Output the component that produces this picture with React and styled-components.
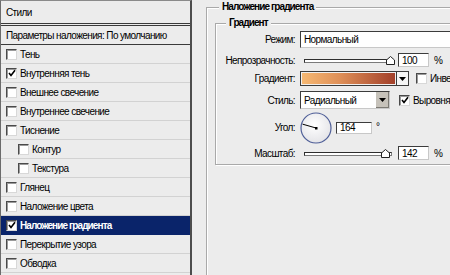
import React from "react";
import styled, { createGlobalStyle } from "styled-components";

const GlobalStyle = createGlobalStyle`
  html, body {
    margin: 0;
    padding: 0;
    background: #ececec;
  }
  body {
    font-family: "Liberation Sans", Arial, sans-serif;
    font-size: 10px;
    letter-spacing: -0.6px;
    color: #000;
  }
`;

const Window = styled.div`
  display: flex;
  width: 450px;
  height: 275px;
  overflow: hidden;
  background: #ececec;
`;

/* ---------- left list ---------- */

const ListPanel = styled.div`
  width: 189px;
  flex-shrink: 0;
  border-left: 1px solid #6b6b6b;
  border-right: 2px solid #4d4d4d;
  border-top: 1px solid #8a8a8a;
  display: flex;
  flex-direction: column;
`;

const ListHeader = styled.div`
  height: 22px;
  display: flex;
  align-items: center;
  padding-left: 5px;
  border-bottom: 3px double #3a3a3a;
`;

const ListBlend = styled.div`
  height: 18px;
  display: flex;
  align-items: center;
  padding-left: 5px;
  white-space: nowrap;
  border-bottom: 1px solid #3a3a3a;
`;

const ListRow = styled.div`
  height: 18px;
  display: flex;
  align-items: center;
  gap: 3px;
  padding-left: ${(p) => (p.$sub ? 17 : 5)}px;
  border-bottom: 1px solid ${(p) => (p.$active ? "#0a246a" : "#d2d2d2")};
  background: ${(p) => (p.$active ? "#0a246a" : "transparent")};
  color: ${(p) => (p.$active ? "#fff" : "#000")};
  font-weight: ${(p) => (p.$active ? 700 : 400)};
  letter-spacing: ${(p) => (p.$active ? -0.9 : -0.6)}px;
  white-space: nowrap;
`;

const Box = styled.span`
  width: 9px;
  height: 9px;
  flex-shrink: 0;
  display: inline-flex;
  align-items: center;
  justify-content: center;
  background: #fff;
  border: 1px solid;
  border-color: #4a4a4a #d8d8d8 #d8d8d8 #4a4a4a;
  box-shadow: inset 1px 1px 0 #9a9a9a;
`;

const Check = ({ on }) => (
  <Box>
    {on && (
      <svg width="8" height="8" viewBox="0 0 8 8">
        <polyline points="1,4 3,6.5 7,1.2" fill="none" stroke="#000" strokeWidth="1.6" />
      </svg>
    )}
  </Box>
);

const effects = [
  { label: "Тень" },
  { label: "Внутренняя тень", checked: true },
  { label: "Внешнее свечение" },
  { label: "Внутреннее свечение" },
  { label: "Тиснение" },
  { label: "Контур", sub: true },
  { label: "Текстура", sub: true },
  { label: "Глянец" },
  { label: "Наложение цвета" },
  { label: "Наложение градиента", checked: true, active: true },
  { label: "Перекрытие узора" },
  { label: "Обводка" },
];

/* ---------- right settings ---------- */

const Settings = styled.div`
  flex: 1;
  padding-left: 14px;
  min-width: 0;
`;

const Group = styled.fieldset`
  margin: 0;
  padding: ${(p) => p.$pad};
  width: ${(p) => p.$w}px;
  min-height: ${(p) => p.$minH || 0}px;
  border: 1px solid #a9a9a9;
  box-shadow: inset 1px 1px 0 #fff, 1px 1px 0 #fff;
  box-sizing: border-box;
`;

const Legend = styled.legend`
  margin-left: ${(p) => p.$ml}px;
  padding: 0 3px;
  font-weight: 700;
  letter-spacing: -0.9px;
  line-height: 14px;
  background: #ececec;
`;

const Row = styled.div`
  display: flex;
  align-items: center;
  height: ${(p) => p.$h}px;
  margin-top: ${(p) => p.$mt}px;
`;

const Label = styled.div`
  width: 79px;
  flex-shrink: 0;
  text-align: right;
  margin-right: 5px;
  white-space: nowrap;
`;

const Field = styled.div`
  box-sizing: border-box;
  width: ${(p) => p.$w}px;
  height: ${(p) => p.$h}px;
  display: flex;
  align-items: center;
  padding-left: 3px;
  margin-left: ${(p) => p.$ml || 0}px;
  background: #fff;
  border: 1px solid;
  border-color: #3c3c3c #c8c8c8 #c8c8c8 #3c3c3c;
  white-space: nowrap;
  overflow: hidden;
  flex-shrink: 0;
`;

const Unit = styled.span`
  margin-left: ${(p) => p.$ml}px;
  align-self: ${(p) => (p.$sup ? "flex-start" : "center")};
  margin-top: ${(p) => (p.$sup ? 9 : 0)}px;
`;

const SliderWrap = styled.div`
  position: relative;
  width: 94px;
  height: 14px;
  flex-shrink: 0;
`;

const Track = styled.div`
  position: absolute;
  left: 4px;
  top: 6px;
  width: 86px;
  height: 2px;
  background: #fff;
  border: 1px solid;
  border-color: #2e2e2e #7a7a7a #7a7a7a #2e2e2e;
`;

const Thumb = styled.svg`
  position: absolute;
  top: 3px;
`;

const Slider = ({ value, max }) => {
  const center = 4 + 86 * (value / max);
  return (
    <SliderWrap>
      <Track />
      <Thumb width="9" height="9" viewBox="0 0 9 9" style={{ left: center - 4.5 }}>
        <polygon points="0.5,8.5 0.5,4 4.5,0.5 8.5,4 8.5,8.5" fill="#fff" stroke="#222" />
      </Thumb>
    </SliderWrap>
  );
};

const GradientPicker = styled.div`
  display: flex;
  width: 109px;
  height: 15px;
  box-sizing: border-box;
  border: 1px solid #3c3c3c;
  flex-shrink: 0;
`;

const Swatch = styled.div`
  flex: 1;
  border: 1px solid #f0f0f0;
  background: linear-gradient(to right, #f6b872 0%, #df9058 40%, #a3402a 100%);
`;

const DropButton = styled.div`
  width: ${(p) => p.$w}px;
  display: flex;
  align-items: center;
  justify-content: center;
  flex-shrink: 0;
  background: ${(p) => (p.$gray ? "#c6c2ba" : "#f6f6f6")};
  border-left: 1px solid ${(p) => (p.$gray ? "#ffffff" : "#3c3c3c")};
  box-shadow: ${(p) => (p.$gray ? "inset -1px -1px 0 #7c7a74" : "none")};
`;

const Arrow = () => (
  <svg width="7" height="4" viewBox="0 0 7 4">
    <polygon points="0,0 7,0 3.5,4" fill="#000" />
  </svg>
);

const Select = styled.div`
  display: flex;
  box-sizing: border-box;
  width: 90px;
  height: 18px;
  background: #fff;
  border: 1px solid;
  border-color: #3c3c3c #c8c8c8 #c8c8c8 #3c3c3c;
  flex-shrink: 0;
`;

const SelectText = styled.div`
  flex: 1;
  display: flex;
  align-items: center;
  padding-left: 3px;
`;

const Option = styled.div`
  display: flex;
  align-items: center;
  gap: 3px;
  margin-left: ${(p) => p.$ml}px;
  white-space: nowrap;
`;

const Dial = ({ angle }) => {
  const r = (angle * Math.PI) / 180;
  const x = 16 + 14 * Math.cos(r);
  const y = 16 - 14 * Math.sin(r);
  return (
    <svg width="32" height="32" viewBox="0 0 32 32">
      <defs>
        <radialGradient id="dialFill" cx="0.45" cy="0.4" r="0.65">
          <stop offset="0" stopColor="#ffffff" />
          <stop offset="1" stopColor="#e2e2e6" />
        </radialGradient>
      </defs>
      <circle cx="16" cy="16" r="15" fill="url(#dialFill)" stroke="#4f5f98" strokeWidth="1.2" />
      <line x1="16" y1="16" x2={x} y2={y} stroke="#000" strokeWidth="1" />
      <rect x="15" y="15" width="2.5" height="2.5" fill="#000" />
    </svg>
  );
};

const App = () => {
  return (
    <>
      <GlobalStyle />
      <Window>
        <ListPanel>
          <ListHeader>Стили</ListHeader>
          <ListBlend>Параметры наложения: По умолчанию</ListBlend>
          {effects.map((e) => (
            <ListRow key={e.label} $sub={e.sub} $active={e.active}>
              <Check on={e.checked} />
              {e.label}
            </ListRow>
          ))}
        </ListPanel>

        <Settings>
          <Group $w={400} $minH={320} $pad="2px 0 0 8px">
            <Legend $ml={4}>Наложение градиента</Legend>
            <Group $w={300} $pad="1px 0 4px 0">
              <Legend $ml={10}>Градиент</Legend>

              <Row $h={17} $mt={0}>
                <Label>Режим:</Label>
                <Field $w={200} $h={17}>Нормальный</Field>
              </Row>

              <Row $h={14} $mt={5}>
                <Label>Непрозрачность:</Label>
                <Slider value={100} max={100} />
                <Field $w={31} $h={14} $ml={4}>100</Field>
                <Unit $ml={5}>%</Unit>
              </Row>

              <Row $h={15} $mt={4}>
                <Label>Градиент:</Label>
                <GradientPicker>
                  <Swatch />
                  <DropButton $w={11}>
                    <Arrow />
                  </DropButton>
                </GradientPicker>
                <Option $ml={7}>
                  <Check />
                  Инверсия
                </Option>
              </Row>

              <Row $h={18} $mt={5}>
                <Label>Стиль:</Label>
                <Select>
                  <SelectText>Радиальный</SelectText>
                  <DropButton $w={13} $gray>
                    <Arrow />
                  </DropButton>
                </Select>
                <Option $ml={9}>
                  <Check on />
                  Выровнять по слою
                </Option>
              </Row>

              <Row $h={31} $mt={3}>
                <Label>Угол:</Label>
                <Dial angle={164} />
                <Field $w={36} $h={12} $ml={4}>164</Field>
                <Unit $ml={4} $sup>°</Unit>
              </Row>

              <Row $h={14} $mt={3}>
                <Label>Масштаб:</Label>
                <Slider value={142} max={150} />
                <Field $w={31} $h={14} $ml={4}>142</Field>
                <Unit $ml={5}>%</Unit>
              </Row>
            </Group>
          </Group>
        </Settings>
      </Window>
    </>
  );
};

export default App;
